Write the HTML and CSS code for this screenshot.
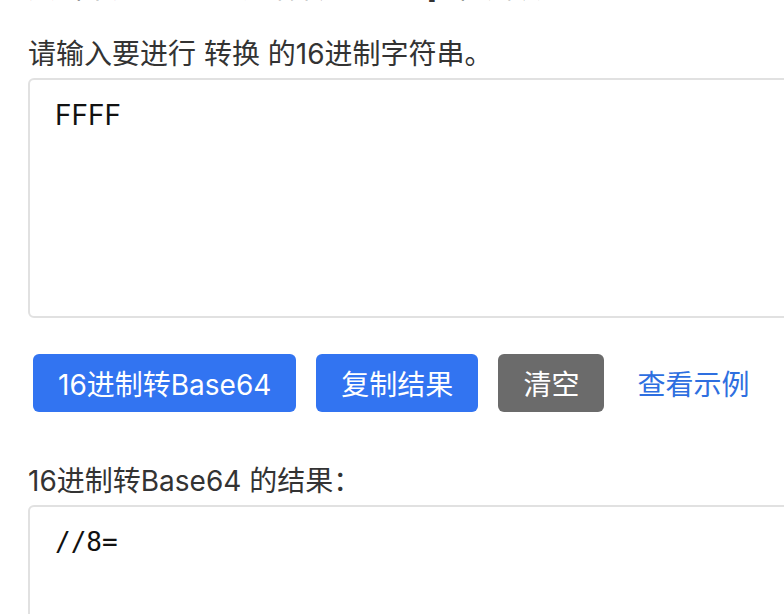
FILE: index.html
```html
<!DOCTYPE html>
<html lang="zh-CN">
<head>
<meta charset="utf-8">
<title>16进制转Base64</title>
<link rel="stylesheet" href="styles.css">
</head>
<body>
<main class="tool">
  <p class="intro">点击下方按钮 [16进制转Base64] 即可转换。</p>
  <label class="label" for="src">请输入要进行 转换 的16进制字符串。</label>
  <textarea id="src" class="box box-input">FFFF</textarea>
  <div class="actions">
    <button class="btn btn-primary" type="button">16进制转Base64</button>
    <button class="btn btn-primary" type="button">复制结果</button>
    <button class="btn btn-gray" type="button">清空</button>
    <a class="link" href="#">查看示例</a>
  </div>
  <label class="label label-result" for="dst">16进制转Base64 的结果：</label>
  <textarea id="dst" class="box box-output">//8=</textarea>
</main>
</body>
</html>
```
FILE: styles.css
```css
html {
  overflow: hidden;
}
body {
  margin: 0;
  background: #ffffff;
  font-family: "Inter", "Noto Sans CJK SC", sans-serif;
  color: #333333;
}
.tool {
  padding-left: 28px;
  display: flex;
  flex-direction: column;
  align-items: flex-start;
}
.intro {
  margin: -32px 0 26px;
  font-size: 28px;
  line-height: 40px;
  color: #333333;
  white-space: nowrap;
}
.label {
  display: block;
  font-size: 28px;
  line-height: 40px;
  margin-bottom: 4px;
  color: #333333;
  white-space: nowrap;
}
.label-result {
  margin-top: 49px;
}
.box {
  box-sizing: border-box;
  width: 820px;
  height: 240px;
  border: 2px solid #e1e1e1;
  border-radius: 6px;
  padding: 15px 25px;
  resize: none;
  outline: none;
  background: #ffffff;
  margin: 0;
}
.box-input {
  font-family: "Inter", "Noto Sans CJK SC", sans-serif;
  font-size: 28px;
  line-height: 40px;
  color: #111111;
}
.box-output {
  font-family: "DejaVu Sans Mono", monospace;
  font-size: 26px;
  line-height: 40px;
  color: #111111;
}
.actions {
  margin-top: 36px;
  margin-left: 5px;
  display: flex;
  align-items: center;
  gap: 20px;
}
.btn {
  height: 58px;
  padding: 0 25px;
  border: none;
  border-radius: 6px;
  font-family: "Inter", "Noto Sans CJK SC", sans-serif;
  font-size: 28px;
  color: #ffffff;
  cursor: pointer;
}
.btn-primary {
  background: #3274f1;
}
.btn-gray {
  background: #6b6b6b;
}
.link {
  margin-left: 13px;
  font-size: 28px;
  color: #2e6fe0;
  text-decoration: none;
}
```
